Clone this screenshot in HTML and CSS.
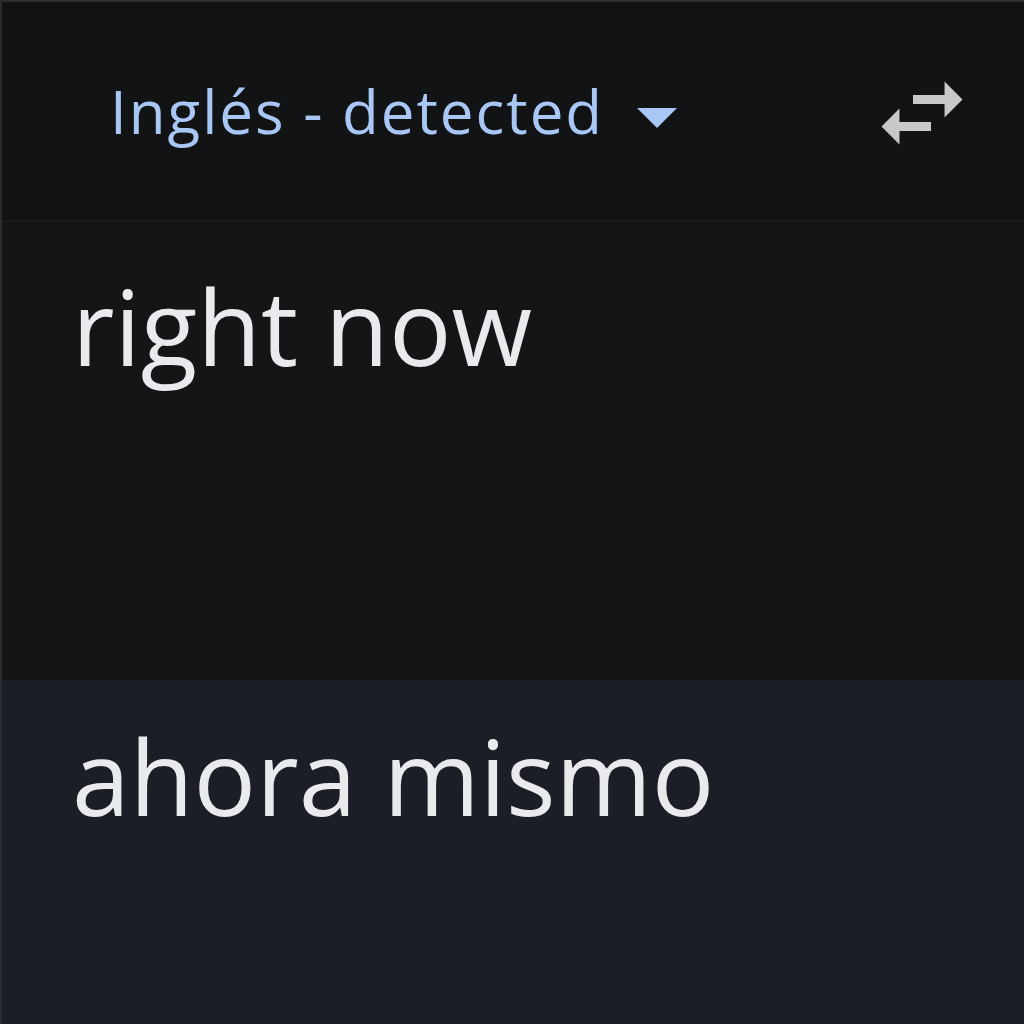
FILE: index.html
```html
<!DOCTYPE html>
<html lang="es">
<head>
<meta charset="utf-8">
<title>Translate</title>
<link rel="stylesheet" href="styles.css">
</head>
<body>
<div class="app">
  <header class="bar">
    <div class="lang">
      <span class="lang-name">Inglés - detected</span>
      <svg class="caret" viewBox="0 0 40 20" width="40" height="20"><path d="M0 0H40L20 20Z" fill="currentColor"/></svg>
    </div>
    <svg class="swap" viewBox="0 0 24 24" width="108" height="108"><path fill="currentColor" d="M6.99 11L3 15l3.99 4v-3H14v-2H6.99v-3zM21 9l-3.99-4v3H10v2h7.01v3L21 9z"/></svg>
  </header>
  <section class="source">
    <p class="text">right now</p>
  </section>
  <section class="target">
    <p class="text">ahora mismo</p>
  </section>
</div>
</body>
</html>
```
FILE: styles.css
```css
html, body {
  margin: 0;
  padding: 0;
  background: #1b1e26;
}
.app {
  width: 1024px;
  height: 1024px;
  display: flex;
  flex-direction: column;
  font-family: "Open Sans", "Liberation Sans", sans-serif;
  border-top: 2px solid #2c2e30;
  border-left: 2px solid #2a2c2e;
  box-sizing: border-box;
  overflow: hidden;
}
.bar {
  height: 218px;
  flex: none;
  background: #111315;
  display: flex;
  align-items: center;
  justify-content: space-between;
  padding: 0 48px 0 108px;
  border-bottom: 2px solid #191a1c;
}
.lang {
  display: flex;
  align-items: center;
  gap: 33px;
  color: #a8c7f5;
}
.lang-name {
  font-size: 60px;
  letter-spacing: 2px;
}
.caret {
  margin-top: 14px;
}
.swap {
  color: #c6c8ca;
  margin-top: 4px;
}
.source {
  height: 458px;
  flex: none;
  background: #141517;
}
.target {
  flex: 1;
  background: #1b1e26;
}
.text {
  margin: 0;
  padding-left: 70px;
  color: #e8eaed;
  font-size: 104px;
  line-height: 1;
}
.source .text {
  padding-top: 52px;
}
.target .text {
  padding-top: 44px;
}
```
